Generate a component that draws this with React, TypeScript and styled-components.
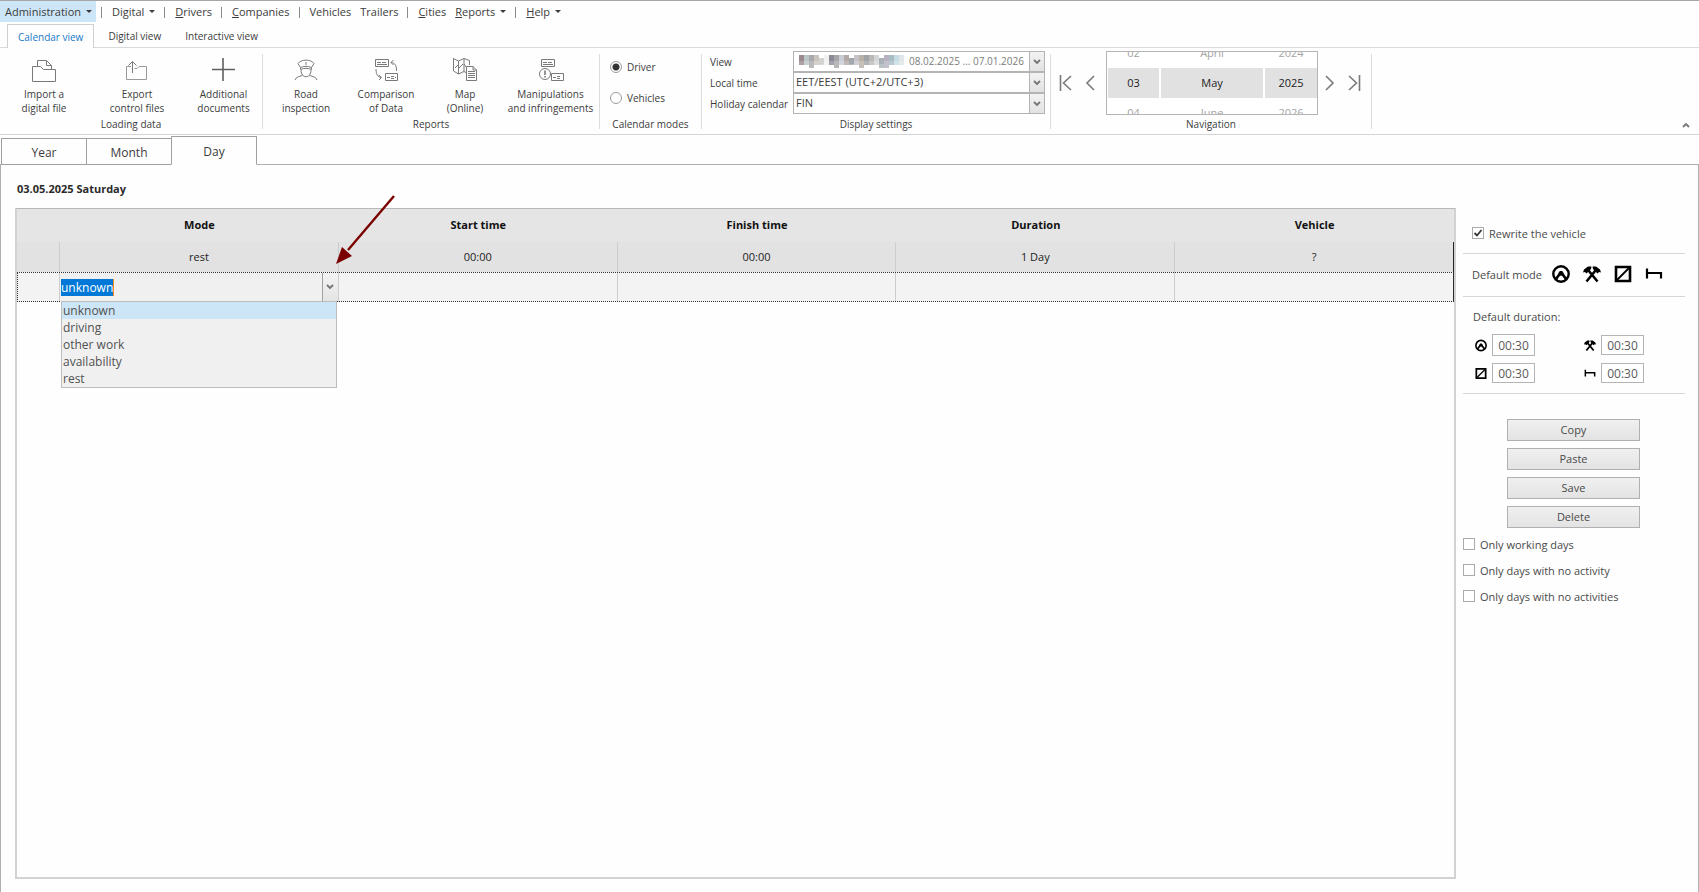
import React from 'react';
import styled, { createGlobalStyle } from 'styled-components';

const GlobalStyle = createGlobalStyle`
  *, *::before, *::after { box-sizing: border-box; }
  body { margin: 0; background: #fefefe; }
  body, button, input, select { font-family: 'Open Sans', 'Noto Sans', sans-serif; color: #3c3c3c; }
  button { margin: 0; padding: 0; border: 0; background: none; cursor: pointer; }
`;

const Page = styled.div`
  display: flex;
  flex-direction: column;
  min-height: 100vh;
  font-size: 11px;
  border-top: 1px solid #a6a6a6;
`;

/* Main menu */

const MenuBar = styled.nav`
  display: flex;
  align-items: stretch;
  height: 23px;
`;

const MenuItem = styled.button<{ $active?: boolean }>`
  display: flex;
  align-items: center;
  gap: 5px;
  height: 21px;
  padding: 0 4px 0 5px;
  font-size: 11px;
  background: ${(p) => (p.$active ? '#cde6f7' : 'transparent')};
`;

const MenuArrow = styled.span`
  border: 3px solid transparent;
  border-top-color: #3c3c3c;
  border-bottom: 0;
`;

const MenuSeparator = styled.span`
  width: 1px;
  height: 11px;
  margin: 6px 5px 0;
  background: #8a8a8a;
`;

/* Ribbon */

const RibbonTabs = styled.div`
  display: flex;
  height: 24px;
  padding-left: 7px;
  border-bottom: 1px solid #dadada;
`;

const RibbonTab = styled.button<{ $active?: boolean }>`
  height: ${(p) => (p.$active ? 24 : 22)}px;
  padding: 0 10px;
  margin-right: ${(p) => (p.$active ? 3 : 2)}px;
  font-size: 10px;
  line-height: 22px;
  color: ${(p) => (p.$active ? '#1979ca' : '#3c3c3c')};
  background: #fefefe;
  border: 1px solid ${(p) => (p.$active ? '#d0d0d0' : 'transparent')};
  border-bottom: 0;
`;

const Ribbon = styled.div`
  display: flex;
  height: 87px;
  font-size: 10px;
  border-bottom: 1px solid #d4d4d4;
`;

const Group = styled.section<{ $width: number }>`
  display: flex;
  flex-direction: column;
  width: ${(p) => p.$width}px;
`;

const GroupBody = styled.div`
  flex: 1;
  display: flex;
`;

const GroupLabel = styled.div`
  height: 17px;
  line-height: 14px;
  text-align: center;
`;

const GroupSeparator = styled.div`
  width: 1px;
  margin: 6px 0 5px;
  background: #dcdcdc;
`;

const BigButton = styled.button<{ $width: number }>`
  display: flex;
  flex-direction: column;
  align-items: center;
  width: ${(p) => p.$width}px;
  padding-top: 9px;
  font-size: 10px;
  line-height: 14px;
  white-space: pre;

  svg { margin-bottom: 4px; }
`;

const ModeList = styled.div`
  display: flex;
  flex-direction: column;
  gap: 15px;
  padding: 11px 0 0 10px;
`;

const ModeLabel = styled.label`
  display: flex;
  align-items: center;
  gap: 5px;
  height: 16px;
`;

const Radio = styled.input.attrs({ type: 'radio' })`
  appearance: none;
  width: 12px;
  height: 12px;
  margin: 0;
  border: 1px solid #9c9c9c;
  border-radius: 50%;
  background: #fff;

  &:checked {
    background: radial-gradient(circle, #333 0 3px, #fff 4px);
  }
`;

const Settings = styled.div`
  flex: 1;
  display: grid;
  grid-template-columns: 83px 252px;
  grid-auto-rows: 21px;
  align-items: center;
  padding: 3px 0 0 8px;
`;

const SelectBox = styled.div`
  position: relative;
  display: flex;
  height: 21px;
  border: 1px solid #b4b4b4;
  background: #fff;
`;

const Select = styled.select<{ $muted?: boolean }>`
  appearance: none;
  flex: 1;
  border: 0;
  margin: 0;
  padding: 0 20px 2px 2px;
  font-size: ${(p) => (p.$muted ? 10 : 11)}px;
  color: ${(p) => (p.$muted ? '#7c7c7c' : '#3c3c3c')};
  text-align: ${(p) => (p.$muted ? 'right' : 'left')};
  background: transparent;
`;

const DropMark = styled.span`
  position: absolute;
  top: 0;
  right: 0;
  bottom: 0;
  width: 15px;
  display: grid;
  place-items: center;
  border-left: 1px solid #b4b4b4;
  background: linear-gradient(#f2f2f2, #e2e2e2);
  pointer-events: none;
`;

const RedactedName = styled.svg`
  position: absolute;
  left: 5px;
  top: 3px;
`;

const Navigator = styled.div`
  display: flex;
  align-items: center;
  padding-left: 3px;
`;

const NavButton = styled.button`
  display: grid;
  place-items: center;
  width: 24px;
  height: 24px;
`;

const Wheel = styled.div`
  display: grid;
  grid-template-columns: 51px 102px 52px;
  gap: 2px;
  width: 212px;
  height: 64px;
  margin-left: 4px;
  padding: 0 0 0 1px;
  border: 1px solid #b4b4b4;
  background: #fff;
`;

const WheelColumn = styled.div`
  display: flex;
  flex-direction: column;
  justify-content: center;
  overflow: hidden;
  text-align: center;
  font-size: 11px;
`;

const WheelValue = styled.div<{ $selected?: boolean }>`
  flex: none;
  height: 30px;
  line-height: 30px;
  color: ${(p) => (p.$selected ? '#222' : '#a4a4a4')};
  background: ${(p) => (p.$selected ? '#e1e1e1' : 'transparent')};
`;

const CollapseButton = styled.button`
  align-self: flex-end;
  width: 16px;
  height: 16px;
  margin: 0 5px 4px auto;
`;

/* Period tabs and day page */

const PeriodTabs = styled.div`
  display: flex;
  align-items: flex-end;
  height: 30px;
  padding-left: 1px;
  margin-bottom: -1px;
`;

const PeriodTab = styled.button<{ $active?: boolean }>`
  position: relative;
  z-index: 1;
  width: 86px;
  height: ${(p) => (p.$active ? 29 : 27)}px;
  padding-top: 2px;
  margin-right: -1px;
  font-size: 12px;
  border: 1px solid #a0a0a0;
  border-bottom-color: ${(p) => (p.$active ? '#fefefe' : '#a0a0a0')};
  background: #fefefe;
`;

const DayPage = styled.main`
  position: relative;
  flex: 1;
  display: flex;
  flex-direction: column;
  padding: 16px 13px 13px 14px;
  border: 1px solid #b0b0b0;
  border-bottom: 0;
`;

const DayTitle = styled.h1`
  margin: 0 0 11px 2px;
  font-size: 11px;
  line-height: 16px;
  color: #2b2b2b;
`;

const Columns = styled.div`
  flex: 1;
  display: flex;
  gap: 7px;
`;

const TableFrame = styled.div`
  flex: 1;
  border: 2px solid #d2d2d2;
  border-top: 1px solid #b8b8b8;
`;

const Table = styled.table`
  width: 100%;
  table-layout: fixed;
  border-collapse: separate;
  border-spacing: 0;
  text-align: center;
`;

const IndicatorCol = styled.col`
  width: 43px;
`;

const HeadCell = styled.th`
  height: 33px;
  padding: 0 0 3px;
  color: #111;
  background: #e5e5e5;
`;

const Cell = styled.td`
  height: 30px;
  padding: 0;
  color: #222;
  border-right: 1px solid #cdcdcd;
`;

const Row = styled.tr`
  background: #e2e2e2;

  ${Cell} { padding-bottom: 1px; }
  ${Cell}:last-child { border-right-color: #222; }
`;

const EditRow = styled.tr`
  background: #f3f3f3;
  outline: 1px dotted #333;
  outline-offset: -1px;

  ${Cell}:last-child { border-right-color: #222; }
`;

const ModeCombo = styled.div`
  position: relative;
  display: flex;
  align-items: center;
  height: 28px;
  padding-left: 1px;
  background: #f0f0f0;
`;

const ModeInput = styled.input`
  field-sizing: content;
  height: 17px;
  padding: 0;
  border: 0;
  border-right: 1px solid #ff8c1a;
  font-size: 12px;
  line-height: 17px;
  color: #fff;
  background: #0078d7;
  outline: 0;
`;

const ModeOpen = styled.button`
  display: grid;
  place-items: center;
  width: 16px;
  height: 28px;
  margin-left: auto;
  border-left: 1px solid #a0a0a0;
  background: linear-gradient(#f3f3f3, #e4e4e4);
`;

const ModeOptions = styled.ul`
  position: absolute;
  top: 28px;
  left: 1px;
  right: 1px;
  z-index: 1;
  margin: 0;
  padding: 0;
  list-style: none;
  text-align: left;
  border: 1px solid #bdbdbd;
  background: #f0f0f0;
`;

const ModeOption = styled.li<{ $active?: boolean }>`
  padding-left: 1px;
  font-size: 12px;
  line-height: 17px;
  color: #505050;
  background: ${(p) => (p.$active ? '#cde6f7' : 'transparent')};
`;

const Pointer = styled.svg`
  position: absolute;
  top: 28px;
  left: 333px;
  z-index: 2;
  pointer-events: none;
`;

/* Side panel */

const Side = styled.aside`
  width: 222px;
  color: #4a4a4a;
`;

const Section = styled.section`
  border-bottom: 1px solid #d6d6d6;
`;

const RewriteSection = styled(Section)`
  padding: 17px 9px 12px;
`;

const ModeSection = styled(Section)`
  display: flex;
  align-items: center;
  height: 43px;
  padding: 0 0 2px 9px;
`;

const ModeButtons = styled.div`
  display: flex;
  margin-left: 4px;
`;

const ModeButton = styled.button`
  display: grid;
  place-items: center;
  width: 31px;
  height: 24px;
`;

const DurationSection = styled(Section)`
  height: 97px;
  padding: 12px 0 0 10px;
`;

const SectionTitle = styled.div`
  line-height: 16px;
`;

const Durations = styled.div`
  display: grid;
  grid-template-columns: 60px 60px;
  grid-template-rows: 22px 22px;
  column-gap: 49px;
  row-gap: 6px;
  align-items: center;
  margin: 9px 0 0 2px;
`;

const Duration = styled.label`
  display: flex;
  align-items: center;
  gap: 5px;
`;

const DurationInput = styled.input<{ $tall?: boolean }>`
  width: 43px;
  height: ${(p) => (p.$tall ? 22 : 20)}px;
  padding: 0;
  border: 1px solid #b4b4b4;
  font-size: 12px;
  text-align: center;
  color: #5a5a5a;
  background: #fff;
`;

const Actions = styled.div`
  display: flex;
  flex-direction: column;
  gap: 7px;
  width: 133px;
  margin: 25px 0 8px 44px;
`;

const ActionButton = styled.button`
  height: 22px;
  padding-bottom: 2px;
  font-size: 11px;
  color: #4a4a4a;
  border: 1px solid #b0b0b0;
  background: linear-gradient(#f0f0f0, #e3e3e3);
`;

const Filters = styled.div`
  display: flex;
  flex-direction: column;
  gap: 10px;
`;

const CheckLabel = styled.label`
  display: flex;
  align-items: center;
  gap: 5px;
  height: 16px;
`;

const CheckFrame = styled.span`
  position: relative;
  display: flex;

  svg {
    position: absolute;
    inset: 0;
    visibility: hidden;
    pointer-events: none;
  }
  input:checked + svg { visibility: visible; }
`;

const Checkbox = styled.input.attrs({ type: 'checkbox' })`
  appearance: none;
  width: 12px;
  height: 12px;
  margin: 0;
  border: 1px solid #aaa;
  background: #fff;
`;

/* Icons */

const Line = styled.svg.attrs({ fill: 'none' })`
  display: block;
  stroke: #7a7a7a;
`;

const ImportIcon = () => (
  <Line width="26" height="26" viewBox="0 0 26 26">
    <path d="M1.5 24.5V9.5H9.5L12.5 12.5H24.5V24.5ZM6.5 9V3.5H15.5L20.5 8.5V12M15.5 3.5V8.5H20.5" />
  </Line>
);
const ExportIcon = () => (
  <Line width="26" height="26" viewBox="0 0 26 26">
    <path d="M7 9.5H2.5V22.5H22.5V9.5H15L13 11.5H10.5" stroke="#9a9a9a" />
    <path d="M8.5 16V5M4.5 8.5L8.5 4.5L12.5 8.5" />
  </Line>
);
const PlusIcon = () => (
  <Line width="26" height="26" viewBox="0 0 26 26">
    <path d="M12 1V24M1 12.500H24" stroke="#606060" strokeWidth="1.600" />
  </Line>
);
const OfficerIcon = () => (
  <Line width="26" height="26" viewBox="0 0 26 26">
    <path d="M5 6.5C8 2 18 2 21 6.5L18.5 10.5C15 9 11 9 7.5 10.5ZM7.5 10.5V12.5C11 11 15 11 18.5 12.5V10.5M8 13C8 22 18 22 18 13M13 5V8M2 23C3 20 6 19.500 9.500 18.500M16.500 18.500C20 19.500 23 20 24 23" />
  </Line>
);
const CompareIcon = () => (
  <Line width="26" height="26" viewBox="0 0 26 26">
    <path d="M2.5 2.5H15.5V9.5H2.5ZM4 5.5H8M9 5.5H13M4 7.5H14M12.5 16.5H24.5V23.5H12.5ZM14 20.5H17M18 19.5H21M18 21.5H21M22 20.5H23" />
    <path d="M23.500 14C23.500 8 22 6 18 5.500M20.500 3L18 5.500L20.500 8M3 12C3 17 4.500 20 8.500 20.500M6 18L8.500 20.500L6 23" />
  </Line>
);
const MapIcon = () => (
  <Line width="26" height="26" viewBox="0 0 26 26">
    <path d="M14 15.500L12 14.500L6.500 17L1.500 14V1.500L6.500 4L12 1.500L17.500 3.500V8M6.500 4V17M12 1.500V14.500M3 11L6 8M7 11L11 7M12 7L14 10" />
    <path d="M14.500 9.500H21L24.500 13V23.500H14.500ZM21 9.500V13H24.500M16 14.500H23M16 16.500H23M16 18.500H23M16 20.500H23" />
  </Line>
);
const WarningIcon = () => (
  <Line width="26" height="26" viewBox="0 0 26 26">
    <path d="M3.500 2.500H16.500V9.500H3.500ZM5 5.500H9M10 5.500H14M5 7.500H15M13.500 16.500H25.500V23.500H13.500ZM15 20.500H18M19 19.500H22M19 21.500H22" />
    <circle cx="7" cy="17" r="5.500" />
    <path d="M7 13.500V18M7 19V20.500" strokeWidth="1.600" />
  </Line>
);
const Chevron = () => (
  <svg width="8" height="6" viewBox="0 0 8 6" fill="none" stroke="#757575" strokeWidth="1.800">
    <path d="M1 1L4 4L7 1" />
  </svg>
);
const Tick = () => (
  <svg width="12" height="12" viewBox="0 0 12 12" fill="none" stroke="#333" strokeWidth="1.800">
    <path d="M2.500 6L5 8.500L9.500 3" />
  </svg>
);

type IconProps = { size: number };

const DrivingIcon = ({ size }: IconProps) => (
  <svg width={size} height={size} viewBox="0 0 18 18" fill="none" stroke="#000">
    <circle cx="9" cy="9" r="7.700" strokeWidth="2.400" />
    <circle cx="9" cy="8.300" r="2" fill="#000" />
    <path d="M4 14L8 8.500M14 14L10 8.500" strokeWidth="2.600" />
  </svg>
);
const WorkIcon = ({ size }: IconProps) => (
  <svg width={size} height={size} viewBox="0 0 18 18" fill="none" stroke="#000">
    <path d="M3.500 16.500L12.500 5.500M14.500 16.500L5.500 5.500" strokeWidth="2.600" />
    <path d="M0 7.500L1 4.500L5 1.500L8.500 1.500L8 4L3.500 8.500L2 7ZM18 7.500L17 4.500L13 1.500L9.500 1.500L10 4L14.500 8.500L16 7Z" fill="#000" stroke="none" />
  </svg>
);
const AvailableIcon = ({ size }: IconProps) => (
  <svg width={size} height={size} viewBox="0 0 18 18" fill="none" stroke="#000">
    <path d="M2 2H16V16H2Z" strokeWidth="2.600" />
    <path d="M3 15L15 3" strokeWidth="1.800" />
  </svg>
);
const RestIcon = ({ size }: IconProps) => (
  <svg width={size} height={size} viewBox="0 0 18 18" fill="none" stroke="#000" strokeWidth="2.200">
    <path d="M2 3.500V13.500M2 8H16V13.500" />
  </svg>
);

const modeIcons = [
  { name: 'driving', Icon: DrivingIcon },
  { name: 'other work', Icon: WorkIcon },
  { name: 'availability', Icon: AvailableIcon },
  { name: 'rest', Icon: RestIcon },
];

const loadingButtons = [
  { text: 'Import a\ndigital file', width: 88, Icon: ImportIcon },
  { text: 'Export\ncontrol files', width: 98, Icon: ExportIcon },
  { text: 'Additional\ndocuments', width: 75, Icon: PlusIcon },
];

const reportButtons = [
  { text: 'Road\ninspection', width: 86, Icon: OfficerIcon },
  { text: 'Comparison\nof Data', width: 74, Icon: CompareIcon },
  { text: 'Map\n(Online)', width: 84, Icon: MapIcon },
  { text: 'Manipulations\nand infringements', width: 87, Icon: WarningIcon },
];

const wheelColumns = [
  ['02', '03', '04'],
  ['April', 'May', 'June'],
  ['2024', '2025', '2026'],
];

const modes = ['unknown', 'driving', 'other work', 'availability', 'rest'];

const mosaic = [
  '#9a8a8e', '#b9c6c8', '#a9a9ad', '#c9c4bd', '#d3d3d0', '#f1f1f1', '#8c8a99', '#a8a6a8', '#c8cdd3', '#b3a9a6',
  '#a2a6ad', '#c6c3c8', '#b8b1a8', '#9fa3a6', '#b9b9b6', '#d3d6d8', '#a9b2b7', '#b6b0c0', '#a8bcc4', '#c6dbe4', '#dfe5e8',
];

function Mosaic() {
  return (
    <RedactedName width="106" height="13" viewBox="0 0 106 13" aria-hidden="true">
      {mosaic.map((color, i) => (
        <g key={i} fill={color}>
          <rect x={i * 5} y={i % 6 === 4 ? 3 : 0} width="5" height="6" />
          <rect x={i * 5} y="5" width="5" height={i % 5 === 2 || i === 16 ? 8 : 5} opacity="0.8" />
        </g>
      ))}
    </RedactedName>
  );
}

function Check({ label, checked }: { label: string; checked?: boolean }) {
  return (
    <CheckLabel>
      <CheckFrame>
        <Checkbox defaultChecked={checked} />
        <Tick />
      </CheckFrame>
      {label}
    </CheckLabel>
  );
}

function MainMenu() {
  return (
    <MenuBar>
      <MenuItem $active>Administration<MenuArrow /></MenuItem>
      <MenuSeparator />
      <MenuItem>Digital<MenuArrow /></MenuItem>
      <MenuSeparator />
      <MenuItem><span><u>D</u>rivers</span></MenuItem>
      <MenuSeparator />
      <MenuItem><span><u>C</u>ompanies</span></MenuItem>
      <MenuSeparator />
      <MenuItem>Vehicles</MenuItem>
      <MenuItem>Trailers</MenuItem>
      <MenuSeparator />
      <MenuItem><span><u>C</u>ities</span></MenuItem>
      <MenuItem><span><u>R</u>eports</span><MenuArrow /></MenuItem>
      <MenuSeparator />
      <MenuItem><span><u>H</u>elp</span><MenuArrow /></MenuItem>
    </MenuBar>
  );
}

function RibbonBar() {
  return (
    <Ribbon>
      <Group $width={262}>
        <GroupBody>
          {loadingButtons.map(({ text, width, Icon }) => (
            <BigButton key={text} $width={width}><Icon />{text}</BigButton>
          ))}
        </GroupBody>
        <GroupLabel>Loading data</GroupLabel>
      </Group>
      <GroupSeparator />
      <Group $width={336}>
        <GroupBody>
          {reportButtons.map(({ text, width, Icon }) => (
            <BigButton key={text} $width={width}><Icon />{text}</BigButton>
          ))}
        </GroupBody>
        <GroupLabel>Reports</GroupLabel>
      </Group>
      <GroupSeparator />
      <Group $width={101}>
        <GroupBody>
          <ModeList>
            <ModeLabel><Radio name="calendar-mode" defaultChecked />Driver</ModeLabel>
            <ModeLabel><Radio name="calendar-mode" />Vehicles</ModeLabel>
          </ModeList>
        </GroupBody>
        <GroupLabel>Calendar modes</GroupLabel>
      </Group>
      <GroupSeparator />
      <Group $width={348}>
        <GroupBody>
          <Settings>
            <label htmlFor="view">View</label>
            <SelectBox>
              <Mosaic />
              <Select id="view" $muted><option>08.02.2025 ... 07.01.2026</option></Select>
              <DropMark><Chevron /></DropMark>
            </SelectBox>
            <label htmlFor="local-time">Local time</label>
            <SelectBox>
              <Select id="local-time"><option>EET/EEST (UTC+2/UTC+3)</option></Select>
              <DropMark><Chevron /></DropMark>
            </SelectBox>
            <label htmlFor="holidays">Holiday calendar</label>
            <SelectBox>
              <Select id="holidays"><option>FIN</option></Select>
              <DropMark><Chevron /></DropMark>
            </SelectBox>
          </Settings>
        </GroupBody>
        <GroupLabel>Display settings</GroupLabel>
      </Group>
      <GroupSeparator />
      <Group $width={320}>
        <GroupBody>
          <Navigator>
            <NavButton aria-label="First">
              <Line width="14" height="16" viewBox="0 0 14 16"><path d="M1.500 0V16M12 1L4.500 8L12 15" strokeWidth="1.600" /></Line>
            </NavButton>
            <NavButton aria-label="Previous">
              <Line width="10" height="16" viewBox="0 0 10 16"><path d="M9 1L2 8L9 15" strokeWidth="1.600" /></Line>
            </NavButton>
            <Wheel>
              {wheelColumns.map((values) => (
                <WheelColumn key={values[1]}>
                  {values.map((v, i) => <WheelValue key={v} $selected={i === 1}>{v}</WheelValue>)}
                </WheelColumn>
              ))}
            </Wheel>
            <NavButton aria-label="Next">
              <Line width="10" height="16" viewBox="0 0 10 16"><path d="M1 1L8 8L1 15" strokeWidth="1.600" /></Line>
            </NavButton>
            <NavButton aria-label="Last">
              <Line width="14" height="16" viewBox="0 0 14 16"><path d="M12.500 0V16M2 1L9.500 8L2 15" strokeWidth="1.600" /></Line>
            </NavButton>
          </Navigator>
        </GroupBody>
        <GroupLabel>Navigation</GroupLabel>
      </Group>
      <GroupSeparator />
      <CollapseButton aria-label="Collapse ribbon">
        <svg width="8" height="6" viewBox="0 0 8 6" fill="none" stroke="#777" strokeWidth="1.800"><path d="M1 5L4 2L7 5" /></svg>
      </CollapseButton>
    </Ribbon>
  );
}

function ActivityTable() {
  return (
    <TableFrame>
      <Table>
        <colgroup><IndicatorCol /><col /><col /><col /><col /><col /></colgroup>
        <thead>
          <tr>
            <HeadCell />
            {['Mode', 'Start time', 'Finish time', 'Duration', 'Vehicle'].map((h) => <HeadCell key={h}>{h}</HeadCell>)}
          </tr>
        </thead>
        <tbody>
          <Row>
            <Cell /><Cell>rest</Cell><Cell>00:00</Cell><Cell>00:00</Cell><Cell>1 Day</Cell><Cell>?</Cell>
          </Row>
          <EditRow>
            <Cell />
            <Cell>
              <ModeCombo>
                <ModeInput aria-label="Mode" defaultValue="unknown" />
                <ModeOpen aria-label="Show modes"><Chevron /></ModeOpen>
                <ModeOptions role="listbox">
                  {modes.map((m, i) => <ModeOption key={m} role="option" aria-selected={i === 0} $active={i === 0}>{m}</ModeOption>)}
                </ModeOptions>
              </ModeCombo>
            </Cell>
            <Cell /><Cell /><Cell /><Cell />
          </EditRow>
        </tbody>
      </Table>
    </TableFrame>
  );
}

function SidePanel() {
  return (
    <Side>
      <RewriteSection><Check label="Rewrite the vehicle" checked /></RewriteSection>
      <ModeSection>
        Default mode
        <ModeButtons>
          {modeIcons.map(({ name, Icon }) => <ModeButton key={name} aria-label={name}><Icon size={18} /></ModeButton>)}
        </ModeButtons>
      </ModeSection>
      <DurationSection>
        <SectionTitle>Default duration:</SectionTitle>
        <Durations>
          {modeIcons.map(({ name, Icon }, i) => (
            <Duration key={name}>
              <Icon size={13} />
              <DurationInput $tall={i === 0} defaultValue="00:30" aria-label={name} />
            </Duration>
          ))}
        </Durations>
      </DurationSection>
      <Actions>
        {['Copy', 'Paste', 'Save', 'Delete'].map((a) => <ActionButton key={a}>{a}</ActionButton>)}
      </Actions>
      <Filters>
        <Check label="Only working days" />
        <Check label="Only days with no activity" />
        <Check label="Only days with no activities" />
      </Filters>
    </Side>
  );
}

export default function App() {
  return (
    <Page>
      <GlobalStyle />
      <MainMenu />
      <RibbonTabs>
        <RibbonTab $active>Calendar view</RibbonTab>
        <RibbonTab>Digital view</RibbonTab>
        <RibbonTab>Interactive view</RibbonTab>
      </RibbonTabs>
      <RibbonBar />
      <PeriodTabs>
        <PeriodTab>Year</PeriodTab>
        <PeriodTab>Month</PeriodTab>
        <PeriodTab $active>Day</PeriodTab>
      </PeriodTabs>
      <DayPage>
        <DayTitle>03.05.2025 Saturday</DayTitle>
        <Columns>
          <ActivityTable />
          <SidePanel />
        </Columns>
        <Pointer width="66" height="76" viewBox="0 0 66 76">
          <path d="M60 3L14 57" stroke="#7b0000" strokeWidth="2.400" fill="none" />
          <path d="M2 71L8 54L18 63Z" fill="#7b0000" />
        </Pointer>
      </DayPage>
    </Page>
  );
}
